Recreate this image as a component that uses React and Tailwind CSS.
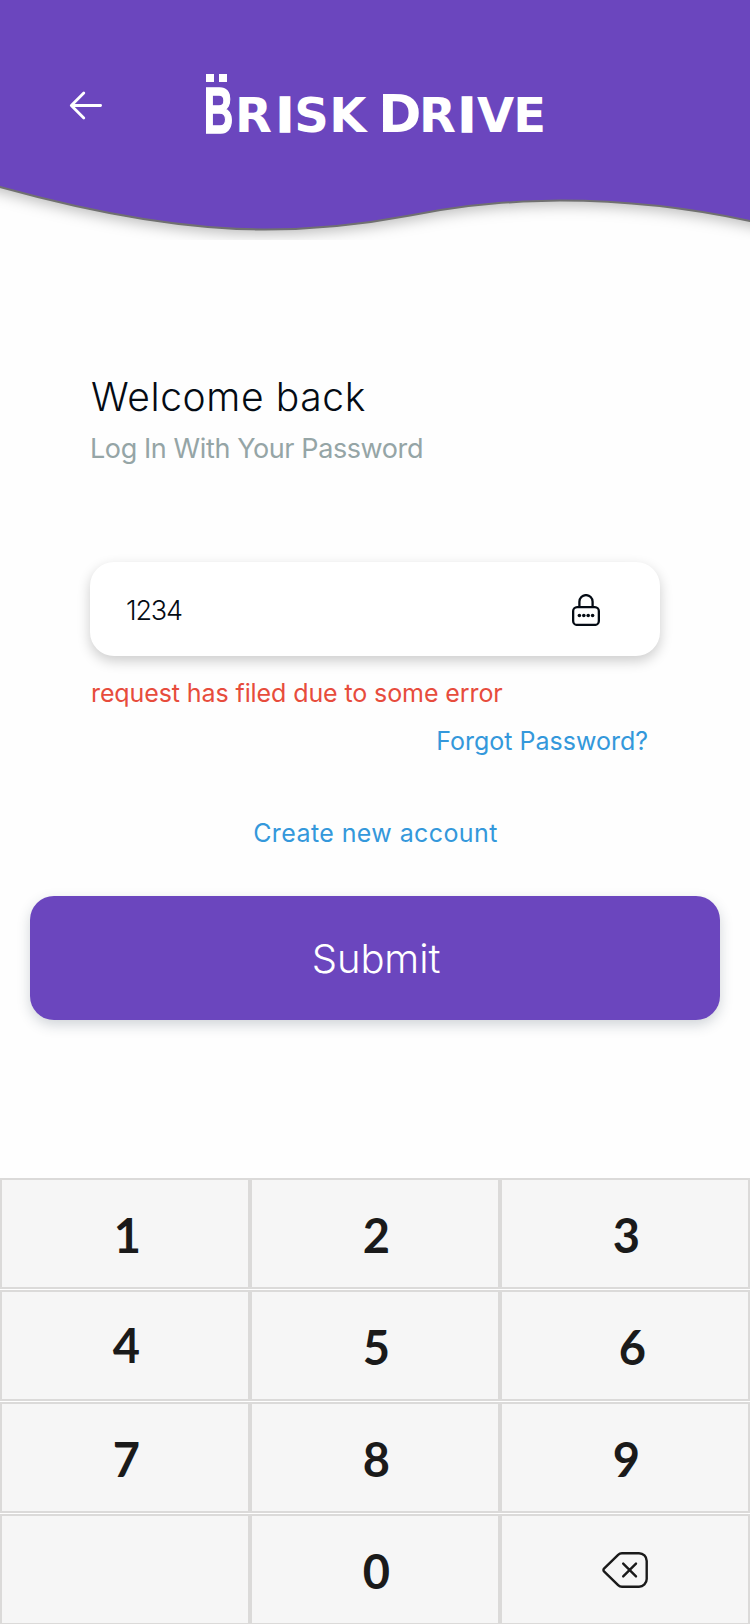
import React from "react";

function Logo() {
  return (
    <svg
      viewBox="200 68 350 92"
      className="h-[92px] w-[350px] overflow-visible"
      fill="#fff"
      stroke="#fff"
      fontFamily="'DejaVu Sans', sans-serif"
      fontWeight="700"
      fontSize="48"
      strokeWidth="0"
    >
      <rect x="206" y="74" width="8" height="8" />
      <rect x="219" y="74" width="8" height="8" />
      <text
        transform="translate(203.8 133.2) scale(0.61 0.98)"
        fontFamily="'Liberation Sans', sans-serif"
        fontSize="67"
        strokeWidth="1.6"
      >
        B
      </text>
      <text y="132.4">
        <tspan x="235">R</tspan>
        <tspan x="276" strokeWidth="1.6">I</tspan>
        <tspan x="294.3">S</tspan>
        <tspan x="329.2">K</tspan>
      </text>
      <text y="132.4">
        <tspan x="378.3" fontSize="52">D</tspan>
        <tspan x="419">R</tspan>
        <tspan x="458" strokeWidth="1.6">I</tspan>
        <tspan x="477">V</tspan>
        <tspan x="513.2">E</tspan>
      </text>
    </svg>
  );
}

function Header() {
  return (
    <header className="relative h-[240px]">
      <svg viewBox="0 0 750 240" className="absolute inset-0 h-[240px] w-[750px]">
        <path
          d="M-20 -20V181L0 187C90 212 180 229.5 265 229.5C320 229.5 365 224 410 215.5C455 206.5 500 200.5 560 200.5C630 200.5 690 208 750 221L770 226V-20Z"
          fill="#6b46be"
          stroke="#707070"
          strokeWidth="2"
          className="drop-shadow-[0_4px_7px_rgba(0,0,0,0.25)]"
        />
      </svg>
      <div className="relative flex pt-[68px]">
        <button aria-label="Back" className="ml-[69px] mt-[22px] h-8 w-[34px]">
          <svg viewBox="0 0 34 32" className="h-8 w-[34px]" fill="none" stroke="#fff" strokeWidth="2.8" strokeLinecap="round" strokeLinejoin="round">
            <path d="M31.6 15.5H2.5M14.8 3L2.3 15.5L14.8 28" />
          </svg>
        </button>
        <div className="ml-[97px]">
          <Logo />
        </div>
      </div>
    </header>
  );
}

function LockIcon() {
  return (
    <svg viewBox="0 0 28 32" className="mt-[2px] h-8 w-7" fill="none" stroke="#040b14" strokeWidth="2.3">
      <rect x="1.15" y="13.1" width="25.7" height="17.8" rx="4" />
      <path d="M7.4 13V7.7a6.6 6.6 0 0 1 13.2 0V13" />
      <g fill="#040b14" stroke="none">
        <circle cx="7.4" cy="21.5" r="1.8" />
        <circle cx="11.8" cy="21.5" r="1.8" />
        <circle cx="16.2" cy="21.5" r="1.8" />
        <circle cx="20.6" cy="21.5" r="1.8" />
      </g>
    </svg>
  );
}

function DeleteIcon() {
  return (
    <svg viewBox="0 0 46 36" className="h-9 w-[46px]" fill="none" stroke="#1a1a1a" strokeWidth="2.4" strokeLinecap="round" strokeLinejoin="round">
      <path d="M20 1.2H37a7.7 7.7 0 0 1 7.7 7.7V27a7.7 7.7 0 0 1-7.7 7.7H20a5.5 5.5 0 0 1-3.9-1.6L2 19.3a1.9 1.9 0 0 1 0-2.7L16.1 2.8A5.5 5.5 0 0 1 20 1.2Z" />
      <path d="M21.2 11.6L34 24.4M34 11.6L21.2 24.4" />
    </svg>
  );
}

const keys = [
  { label: "1", shift: "pt-[3px] pl-[5px]" },
  { label: "2", shift: "pt-[3px] pl-[3px]" },
  { label: "3", shift: "pt-[3px] pl-[3px]" },
  { label: "4", shift: "pl-[3px]" },
  { label: "5", shift: "pt-[3px] pl-[3px]" },
  { label: "6", shift: "pt-[3px] pl-[15px]" },
  { label: "7", shift: "pt-[3px] pl-[3px]" },
  { label: "8", shift: "pt-[3px] pl-[3px]" },
  { label: "9", shift: "pt-[3px] pl-[3px]" },
  { label: "", shift: "" },
  { label: "0", shift: "pt-[3px] pl-[3px]" },
  { label: "delete", shift: "" },
];

function Keypad() {
  return (
    <div className="grid auto-rows-[111px] grid-cols-3 gap-y-px">
      {keys.map((key, i) => (
        <button
          key={i}
          aria-label={key.label || undefined}
          className={`flex items-center justify-center border-2 border-[#dbdad9] bg-[#f6f6f6] font-['Lato',sans-serif] text-[47px] leading-none font-bold text-[#1a1a1a] ${key.shift}`}
        >
          {key.label === "delete" ? <DeleteIcon /> : key.label}
        </button>
      ))}
    </div>
  );
}

export default function App() {
  return (
    <div className="h-[1624px] w-[750px] overflow-hidden bg-[#fefefe] font-['Inter',sans-serif] font-normal">
      <Header />
      <main className="flex h-[938px] flex-col">
        <h1 className="mt-[133px] ml-[91px] h-[48px] text-[39px] leading-[48px] font-light tracking-[0.6px] whitespace-nowrap text-[#040b14]">Welcome back</h1>
        <p className="mt-[10px] ml-[90px] h-[36px] text-[27px] leading-[36px] tracking-[-0.4px] whitespace-nowrap text-[#95a5a6]">Log In With Your Password</p>
        <div className="mt-[95px] ml-[90px] flex h-[94px] w-[570px] items-center justify-between rounded-[24px] bg-white pr-[60px] pl-[36px] shadow-[0_5px_13px_rgba(0,0,0,0.2)]">
          <span className="pt-[4px] text-[27px] font-light tracking-[-1.2px] text-[#040b14]">1234</span>
          <LockIcon />
        </div>
        <p className="mt-[19px] ml-[91px] h-[36px] text-[25px] leading-[36px] tracking-[-0.1px] whitespace-nowrap text-[#e74c3c]">request has filed due to some error</p>
        <a className="mt-[12px] mr-[102px] h-[36px] self-end text-[25px] leading-[36px] whitespace-nowrap text-[#3498db]">Forgot Password?</a>
        <a className="mt-[56px] h-[36px] self-center pl-[1px] text-[25px] leading-[36px] tracking-[0.4px] whitespace-nowrap text-[#3498db]">Create new account</a>
        <button className="mt-[45px] ml-[30px] h-[124px] w-[690px] rounded-[24px] bg-[#6b46be] pt-[1px] pl-[2px] text-[40px] font-light tracking-[-0.1px] text-white shadow-[0_5px_13px_rgba(44,62,80,0.22)]">Submit</button>
      </main>
      <Keypad />
    </div>
  );
}
